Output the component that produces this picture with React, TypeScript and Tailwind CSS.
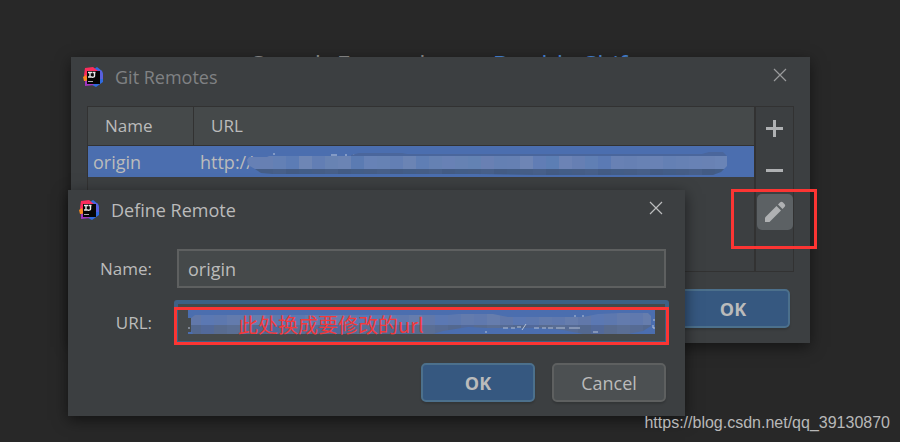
import React from "react";

const font = "font-['Open_Sans','Noto_Sans_CJK_SC',sans-serif]";

function IdeLogo() {
  return (
    <svg width="20" height="20" viewBox="0 0 20 20" aria-hidden="true" className="shrink-0">
      <path d="M11 2 L14 0 L19 4 L20 7 L20 15 L13 20 L9 18 Z" fill="#2f6be0" />
      <path d="M15 2 L19 4 L20 8 L20 12 L16 12 Z" fill="#5a5fdd" />
      <path d="M2 1 L10 0 L15 4 L15 8 L3 14 L1 8 Z" fill="#fb2c5c" />
      <path d="M0 10 L3 8 L5 14 L1 14 Z" fill="#fb8a1e" />
      <path d="M2 14 L7 13 L11 18 L2 19 Z" fill="#a235c0" />
      <rect x="4" y="4" width="13" height="13" fill="#050505" />
      <path d="M5 5.5h4M7 5v5M5 10h4M9.5 5.5h3M11.5 5v4q0 1.3-2.5 1.2" stroke="#e8e8e8" strokeWidth="1.4" fill="none" />
      <rect x="5" y="14" width="5" height="1" fill="#aaa" />
    </svg>
  );
}

function CloseButton({ color }: { color: string }) {
  return (
    <button type="button" aria-label="Close" className={`flex size-5 items-center justify-center ${color}`}>
      <svg width="14" height="14" viewBox="0 0 14 14" stroke="currentColor" strokeWidth="1.2" aria-hidden="true">
        <path d="M1 1L13 13M13 1L1 13" />
      </svg>
    </button>
  );
}

const rowLight = ["#6680b5", "#6780b3", "#6380b5", "#5c7cb5", "#6e86b5", "#627eb4", "#6883b3", "#6b84b4", "#5b7bb2", "#6782b6", "#6682b4", "#637fb4", "#6b84b4", "#5f7eb4", "#6581b3", "#6881b5", "#6682b3", "#6382b3", "#6980b3", "#6480b3", "#6580b3", "#6e85b5", "#617db5", "#5c7eb4", "#6c83b5", "#667fb3", "#607fb4", "#5b7ab4", "#6881b4", "#6680b3", "#6882b4", "#6982b5", "#6480b4", "#6681b4", "#6882b5", "#6982b4", "#6a84b6"];
const rowDark = ["#435d87", "#455d86", "#475f89", "#435b84"];

function RowRedaction() {
  return (
    <svg width="482" height="26" viewBox="0 0 482 26" aria-hidden="true" className="absolute top-[5px] left-[53px]">
      <clipPath id="row-smudge">
        <path d="M0 9L2 6H20L24 4H104L112 2H155L160 3H455L462 1H476L480 5V15L474 21L466 24H290L230 23H26L14 22L8 18L1 14Z" />
      </clipPath>
      <path d="M26 3h2M84 4h6M98 4h2M106 4h4" stroke="#bbc6dc" strokeWidth="1" />
      <g clipPath="url(#row-smudge)">
        <rect x="104" width="380" height="8" fill="#4a669c" />
        {rowLight.map((fill, i) => (
          <g key={i}>
            <rect x={i * 13} y="5" width="13" height="13" fill={fill} />
            <rect x={i * 13} y="18" width="13" height="7" fill={rowDark[i % 4]} />
          </g>
        ))}
      </g>
    </svg>
  );
}

const urlLight = ["#6178aa", "#667dad", "#6079ae", "#637bad", "#5d78af", "#5b78b3"];
const urlDark = ["#53688f", "#586b8f", "#566b94", "#52699a", "#5a6e94"];

function UrlSelection() {
  return (
    <svg width="467" height="24" viewBox="0 0 467 24" aria-hidden="true" className="absolute top-[10px] left-[14px]">
      <rect width="467" height="24" fill="#4b6eaf" />
      <clipPath id="url-smudge">
        <path d="M3 8L7 5H260L270 4H305L320 7H395L410 4L432 3H460L463 6V16L455 21L440 24H395L375 20L355 18H300L280 17L255 21L245 24H5L3 20Z" />
      </clipPath>
      <g clipPath="url(#url-smudge)">
        {Array.from({ length: 36 }, (_, i) => (
          <g key={i}>
            <rect x={i * 13} y="0" width="13" height="15" fill={urlLight[(i * 5) % 6]} />
            <rect x={i * 13} y="15" width="13" height="9" fill={urlDark[(i * 3) % 5]} />
          </g>
        ))}
      </g>
      <path d="M0 8h3v14H0z" fill="#45494a" />
      <path d="M0 18h2M297 22h2M315 18h5M323 18h4M329 17h4M334 20L338 14M346 18h5M354 18h4M360 18h5M368 18h9M381 18h11M405 22h5M386 6h2M394 6h2M465 10h2M465 15v3h2" stroke="#b4c1d6" strokeWidth="1" fill="none" />
    </svg>
  );
}

const blueButton = "h-[39px] w-[114px] rounded-[5px] border-2 border-[#4c708c] bg-[#365880] text-[18px] leading-6 font-bold text-[#bbbbbb] shadow-[0_2px_2px_rgba(0,0,0,0.15)]";

function GitRemotes() {
  return (
    <section aria-label="Git Remotes" className="absolute top-[57px] left-[71px] flex w-[739px] flex-col bg-[#3c3f41] shadow-[0_4px_14px_rgba(0,0,0,0.5)]">
      <header className="flex h-[49px] items-start gap-3 pt-2 pr-5 pl-3">
        <div className="flex h-6 flex-1 items-center gap-3">
          <IdeLogo />
          <h2 className="text-[18px] leading-6 text-[#808284]">Git Remotes</h2>
        </div>
        <CloseButton color="text-[#9a9b9c]" />
      </header>
      <div className="mr-4 ml-4 flex h-[166px] border border-[#323232]">
        <div className="min-w-0 flex-1">
          <table className="w-full table-fixed border-separate border-spacing-0 text-left leading-6 text-[#bbbbbb]">
            <colgroup>
              <col className="w-[106px]" />
              <col />
            </colgroup>
            <thead className="bg-[#45494a] text-[17px]">
              <tr className="h-[39px]">
                <th className="border-r border-b border-[#323232] p-0 pl-[17px] font-normal">Name</th>
                <th className="border-b border-[#323232] p-0 pl-[17px] font-normal">URL</th>
              </tr>
            </thead>
            <tbody className="bg-[#4b6eaf] text-[18px]">
              <tr className="h-[31px]">
                <td className="p-0 pl-[5px]">origin</td>
                <td className="p-0">
                  <div className="relative flex h-[31px] items-center pl-[6px]">
                    http://
                    <RowRedaction />
                  </div>
                </td>
              </tr>
            </tbody>
          </table>
        </div>
        <div className="flex w-[39px] flex-col items-center gap-[6px] border-l-2 border-[#323232] pt-[3px] text-[#afb1b3]">
          <button type="button" aria-label="Add" className="flex size-9 items-center justify-center">
            <svg width="17" height="17" viewBox="0 0 17 17" fill="currentColor" aria-hidden="true">
              <path d="M7 0h3v7h7v3h-7v7H7v-7H0V7h7z" />
            </svg>
          </button>
          <button type="button" aria-label="Remove" className="flex size-9 items-center justify-center">
            <svg width="17" height="3" aria-hidden="true">
              <rect width="17" height="3" fill="currentColor" />
            </svg>
          </button>
          <button type="button" aria-label="Edit" className="flex size-9 items-center justify-center rounded-[5px] bg-[#5c6164]">
            <svg width="22" height="22" viewBox="0 0 22 22" fill="currentColor" aria-hidden="true">
              <path d="M1 16.5L12.5 5L17 9.5L5.5 21H1z" />
              <path d="M14 3.5L16.2 1.3Q17.5 .2 18.8 1.3L20.7 3.2Q21.8 4.5 20.7 5.8L18.5 8z" />
            </svg>
          </button>
        </div>
      </div>
      <footer className="flex justify-end pt-[17px] pr-5 pb-[15px]">
        <button type="button" className={blueButton}>OK</button>
      </footer>
    </section>
  );
}

function DefineRemote() {
  return (
    <section aria-label="Define Remote" className="absolute top-[190px] left-[68px] w-[617px] bg-[#3c3f41] shadow-[0_4px_14px_rgba(0,0,0,0.55)]">
      <header className="flex h-[59px] items-start pt-2 pr-[19px] pl-[11px]">
        <div className="flex h-6 flex-1 items-center gap-3">
          <IdeLogo />
          <h2 className="text-[18px] leading-6 text-[#bbbbbb]">Define Remote</h2>
        </div>
        <CloseButton color="text-[#bcbdbe]" />
      </header>
      <form className="flex flex-col pr-4 pb-[14px]" onSubmit={(e) => e.preventDefault()}>
        <div className="flex items-center pr-[3px]">
          <label htmlFor="remote-name" className="w-[84px] text-right text-[17px] leading-6 text-[#bbbbbb]">Name:</label>
          <input id="remote-name" defaultValue="origin" className="ml-[25px] h-[39px] min-w-0 flex-1 border-2 border-[#5e6060] bg-[#45494a] px-[9px] text-[18px] leading-6 text-[#bbbbbb] outline-none" />
        </div>
        <div className="mt-3 flex items-center">
          <label htmlFor="remote-url" className="w-[84px] text-right text-[17px] leading-6 text-[#bbbbbb]">URL:</label>
          <div className="relative ml-[22px] flex-1">
            <input id="remote-url" className="block h-[45px] w-full rounded-[3px] border-4 border-[#3d6185] bg-[#45494a] px-2 text-[18px] text-[#bbbbbb] outline-none" />
            <UrlSelection />
            <div className="absolute inset-x-0 top-[7px] bottom-0 border-[3px] border-[#fc3533]" />
            <p className="absolute top-[13px] left-16 font-['Noto_Sans_CJK_SC',sans-serif] text-[20px] leading-6 whitespace-nowrap text-[#f23a3c]">此处换成要修改的url</p>
          </div>
        </div>
        <div className="mt-[18px] flex justify-end gap-[17px] pr-[3px]">
          <button type="submit" className={blueButton}>OK</button>
          <button type="button" className="h-[39px] w-[114px] rounded-[5px] border-2 border-[#5e6060] bg-[#4c5052] text-[18px] leading-6 text-[#bbbbbb] shadow-[0_2px_2px_rgba(0,0,0,0.15)]">Cancel</button>
        </div>
      </form>
    </section>
  );
}

export default function App() {
  return (
    <main className={`relative min-h-screen overflow-hidden bg-[#282828] ${font}`}>
      <p className="flex gap-5 pt-12 pl-[251px] text-[25px] leading-8 whitespace-nowrap">
        <span className="text-[#929292]">Search Everywhere</span>
        <kbd className="font-['Open_Sans',sans-serif] text-[#4a8be0]">Double Shift</kbd>
      </p>
      <GitRemotes />
      <DefineRemote />
      <div className="absolute top-[189px] left-[731px] h-[60px] w-[86px] border-[3px] border-[#fc3533]" />
      <footer className="absolute right-[10px] bottom-[7px] font-['Liberation_Sans',sans-serif] text-base leading-6 text-[#b8b8b8]">https://blog.csdn.net/qq_39130870</footer>
    </main>
  );
}
